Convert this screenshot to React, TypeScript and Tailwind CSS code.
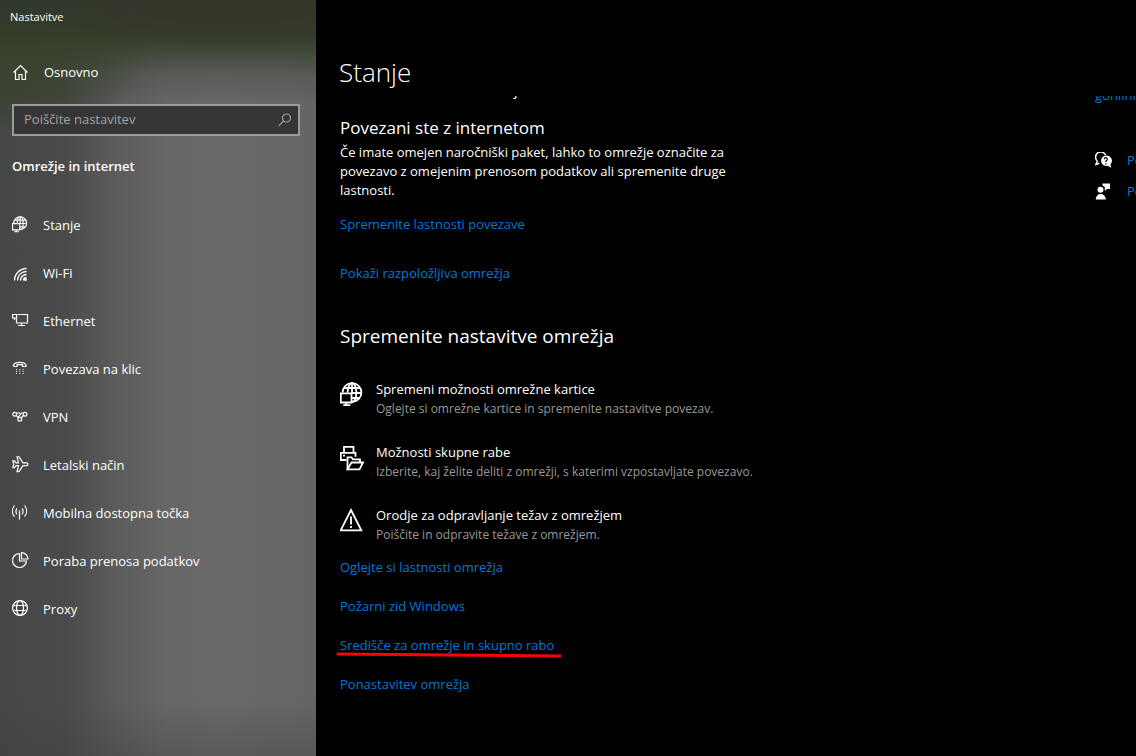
import type { ReactNode } from "react";

type IconProps = { children: ReactNode; box?: string; className?: string };

function Icon({ children, box = "0 0 17 17", className = "mb-1 size-[17px]" }: IconProps) {
  return (
    <svg
      viewBox={box}
      className={`shrink-0 ${className}`}
      fill="none"
      stroke="currentColor"
      strokeWidth="1.2"
      aria-hidden="true"
    >
      {children}
    </svg>
  );
}

const HomeIcon = () => (
  <Icon className="mb-0.5 size-[17px]">
    <path d="M1.5 8.5 8.5 1.5l7 7M3.5 7v8.5h3.500V10.500h3V15.500h3.500V7" />
  </Icon>
);

const globeMonitor = (
  <>
    <path d="M3.600 11.500A9.400 9.400 0 1 1 13 20.900" />
    <path d="M4.800 7h16.500M12.500 12h10M12.500 17h8" />
    <path d="M8.600 11.500C8.700 6.500 10.500 2.100 13 2.100s4.400 4.400 4.400 9.400-1.900 9.400-4.400 9.400M13 2.100v10" />
    <path d="M1.800 12.300h10.700v9.200H1.800zM7.200 21.500v2.500M4.300 24.200h7" />
  </>
);

const StatusIcon = () => (
  <Icon box="1 1 25 25">
    <g strokeWidth="1.700">{globeMonitor}</g>
  </Icon>
);

const WifiIcon = () => (
  <Icon className="mb-0.5 size-[17px]">
    <path d="M2.500 15.500C2.500 9 8 3.500 14.500 3.500M5.500 15.500c0-5 4-9 9-9M8.500 15.500c0-3.300 2.700-6 6-6M11.300 15.500c0-1.800 1.400-3.200 3.200-3.200" strokeWidth="1.300" />
    <circle cx="13.500" cy="14.500" r="1.500" fill="currentColor" stroke="none" />
  </Icon>
);

const EthernetIcon = () => (
  <Icon>
    <path d="M5.500 2.500h10v8.500h-11V6.500M9.500 11v2.500M6 13.500h7" />
    <path d="M.6 2.500h4v3.500h-4zM2.500 6v2" />
  </Icon>
);

const DialIcon = () => (
  <Icon>
    <path d="M1.500 6.500V5C3 1.500 12.500 1.500 14 5v1.500h-3.500V4.700H5v1.800z" />
    <path d="M4 9.500h1M7.300 9.500h1M10.600 9.500h1M4 11.500h1M7.300 11.500h1M10.600 11.500h1M4 13.500h1M7.300 13.500h1M10.600 13.500h1" />
  </Icon>
);

const VpnIcon = () => (
  <Icon>
    <circle cx="2.700" cy="6.200" r="1.900" />
    <circle cx="13" cy="6.200" r="1.900" />
    <circle cx="7.800" cy="11.300" r="1.900" />
    <path d="M4.300 5h3l1.500 1.500M4.300 7.500l2.300 2.300M11.500 5h-2L6 9.500M11.500 7.500 9.200 9.800" />
  </Icon>
);

const PlaneIcon = () => (
  <Icon>
    <path d="M.8 4.800h1.700l1.500 2h2.500L5 .8h2l4 6h3.500c2 0 2 2.900 0 2.900H11l-4 6H5l1.500-6H4l-1.500 2H.8l.9-3.500z" />
  </Icon>
);

const HotspotIcon = () => (
  <Icon>
    <path d="M7.500 6.500V15.500M5 4.500c-1.400 1.500-1.400 4.300 0 5.800M10 4.500c1.400 1.500 1.400 4.300 0 5.800M2.500 1.500C-.2 5 -.2 9.500 2.500 12.500M12.500 1.500c2.700 3.500 2.700 8 0 11" />
  </Icon>
);

const UsageIcon = () => (
  <Icon>
    <path d="M7.500 1.500a7 7 0 1 0 7 7.500h-7z" />
    <path d="M9.500.6v6.400h6.500C16 3.500 13 .6 9.500.6z" />
  </Icon>
);

const ProxyIcon = () => (
  <Icon>
    <circle cx="8" cy="8" r="7.400" />
    <ellipse cx="8" cy="8" rx="3.500" ry="7.400" />
    <path d="M1.500 5.500h13M1.500 10.500h13" />
  </Icon>
);

const large = "mt-[3px] h-[26px] w-[25px]";

const AdapterIcon = () => (
  <Icon box="1 1 25 26" className={large}>
    <g strokeWidth="1.800">{globeMonitor}</g>
  </Icon>
);

const SharingIcon = () => (
  <Icon box="1 0 25 26" className={large}>
    <g strokeWidth="1.800">
      <path d="M5 7.500V1.800h9.500V7.500M7.500 15H1.800V7.800h14.700v4M4 10.700h2" />
      <path d="M8.500 24V12.300h4l1.500 2h7v3" />
      <path d="M8.500 24.300 12.500 17.500h11.500l-3.500 6.800z" />
    </g>
  </Icon>
);

const WarningIcon = () => (
  <Icon box="1 1 25 26" className={large}>
    <path d="M12 3 22.300 23.300H1.700zM12 9.500v8M12 19v2" strokeWidth="1.800" />
  </Icon>
);

const nav = [
  { label: "Stanje", icon: <StatusIcon /> },
  { label: "Wi-Fi", icon: <WifiIcon /> },
  { label: "Ethernet", icon: <EthernetIcon /> },
  { label: "Povezava na klic", icon: <DialIcon /> },
  { label: "VPN", icon: <VpnIcon /> },
  { label: "Letalski način", icon: <PlaneIcon /> },
  { label: "Mobilna dostopna točka", icon: <HotspotIcon /> },
  { label: "Poraba prenosa podatkov", icon: <UsageIcon /> },
  { label: "Proxy", icon: <ProxyIcon /> },
];

const options = [
  {
    title: "Spremeni možnosti omrežne kartice",
    text: "Oglejte si omrežne kartice in spremenite nastavitve povezav.",
    icon: <AdapterIcon />,
  },
  {
    title: "Možnosti skupne rabe",
    text: "Izberite, kaj želite deliti z omrežji, s katerimi vzpostavljate povezavo.",
    icon: <SharingIcon />,
  },
  {
    title: "Orodje za odpravljanje težav z omrežjem",
    text: "Poiščite in odpravite težave z omrežjem.",
    icon: <WarningIcon />,
  },
];

function TextLink({ children }: { children: ReactNode }) {
  return (
    <a href="#" className="relative text-[13px] leading-5 text-[#0078d7] hover:text-[#999]">
      {children}
    </a>
  );
}

function Sidebar() {
  return (
    <aside className="flex w-[316px] shrink-0 flex-col bg-[radial-gradient(ellipse_200px_40px_at_230px_10px,rgba(56,50,40,0.7)_0%,transparent_100%),linear-gradient(to_bottom,#30382c_0px,#343c2a_35px,rgba(56,66,46,0.85)_50px,rgba(66,72,60,0.4)_75px,transparent_105px),radial-gradient(ellipse_150px_80px_at_0px_55px,#36412b_0%,#36412b_30%,transparent_100%),linear-gradient(to_bottom,transparent_700px,rgba(60,60,60,0.35)_756px),linear-gradient(to_right,#454746_0px,#4a4a4a_65px,#5b5b5b_115px,#666_165px,#696969_220px,#656565_316px)]">
      <p className="px-2.5 pt-[9px] text-[11px] leading-4">Nastavitve</p>
      <a href="#" className="mt-9 flex h-6 items-center gap-[15px] px-3 text-[13px]">
        <HomeIcon />
        Osnovno
      </a>
      <label className="mx-3 mt-[19px] flex h-8 w-72 items-center border-2 border-[#9a9a98] bg-[#353535] pr-1.5 pb-px pl-2.5">
        <input
          type="text"
          aria-label="Poiščite nastavitev"
          placeholder="Poiščite nastavitev"
          className="min-w-0 flex-1 bg-transparent text-[13px] outline-none placeholder:text-[#a3a3a3]"
        />
        <svg viewBox="0 0 14 14" className="size-3.5 text-[#a3a3a3]" fill="none" stroke="currentColor" strokeWidth="1.2" aria-hidden="true">
          <circle cx="8.500" cy="5" r="4" />
          <path d="M5.500 8 .8 12.800" />
        </svg>
      </label>
      <h2 className="mt-5 px-3 text-[13px] leading-5 font-semibold">Omrežje in internet</h2>
      <nav className="mt-[26px] flex flex-col">
        {nav.map((item) => (
          <a key={item.label} href="#" className="flex h-12 items-center gap-3.5 px-3 text-[13px]">
            {item.icon}
            {item.label}
          </a>
        ))}
      </nav>
    </aside>
  );
}

const HelpIcon = () => (
  <svg viewBox="0 0 17 17" className="size-[17px] shrink-0" fill="none" stroke="currentColor" aria-hidden="true">
    <path d="M2.300 9A5.200 5.200 0 1 1 10.500 3M2.500 9 .8 12.500l3.500-1.300" strokeWidth="1.500" />
    <path d="M10.700 3.500a5.300 5.300 0 1 0 2.300 10.300l3.300 2.200-.9-3.600A5.300 5.300 0 0 0 10.700 3.500z" fill="currentColor" stroke="none" />
    <path d="M9.300 7.300c0-2.300 3.300-2 3 .1-.2 1.200-1.500 1.200-1.500 2.600M10.800 11.300v1.200" stroke="#000" strokeWidth="1.200" />
  </svg>
);

const FeedbackIcon = () => (
  <svg viewBox="0 0 17 17" className="size-[17px] shrink-0" fill="currentColor" aria-hidden="true">
    <circle cx="5.500" cy="6.800" r="3" />
    <path d="M.8 16.500c0-7.500 10-7.500 10 0zM7.500.5H15V6H12L9.800 8V4L7.500 2.500z" />
  </svg>
);

function RelatedColumn() {
  return (
    <aside className="flex w-[41px] shrink-0 flex-col overflow-hidden whitespace-nowrap">
      <div className="-mt-3.5">
        <TextLink>gonilnik</TextLink>
      </div>
      <a href="#" className="mt-[39px] flex h-[31px] items-center gap-[15px] text-[13px] text-[#0078d7]">
        <span className="text-white"><HelpIcon /></span>
        Poiščite pomoč
      </a>
      <a href="#" className="flex h-[31px] items-center gap-[15px] text-[13px] text-[#0078d7]">
        <span className="text-white"><FeedbackIcon /></span>
        Pošljite povratne informacije
      </a>
    </aside>
  );
}

export default function App() {
  return (
    <div className="flex min-h-screen bg-black font-['Open_Sans','Noto_Sans',sans-serif] text-white">
      <Sidebar />
      <div className="flex min-w-0 flex-1 flex-col pl-5">
        <h1 className="h-24 pt-[54px] pl-[3px] text-[26px] leading-9 font-light">Stanje</h1>
        <div className="flex flex-1 overflow-hidden">
          <main className="flex min-w-0 flex-1 flex-col pl-1">
            <p className="-mt-4 pl-[174px] text-sm leading-5">j</p>
            <h3 className="mt-4 text-[17px] leading-6">Povezani ste z internetom</h3>
            <p className="mt-[3px] max-w-[410px] text-[13px] leading-[19px]">
              Če imate omejen naročniški paket, lahko to omrežje označite za povezavo z omejenim
              prenosom podatkov ali spremenite druge lastnosti.
            </p>
            <div className="mt-3.5 flex flex-col items-start gap-[29px]">
              <TextLink>Spremenite lastnosti povezave</TextLink>
              <TextLink>Pokaži razpoložljiva omrežja</TextLink>
            </div>
            <h2 className="mt-[39px] text-[19px] leading-7">Spremenite nastavitve omrežja</h2>
            <div className="mt-[29px] flex flex-col gap-6">
              {options.map((option) => (
                <a key={option.title} href="#" className="flex gap-[11px]">
                  {option.icon}
                  <span className="flex flex-col">
                    <span className="text-[13px] leading-5">{option.title}</span>
                    <span className="text-xs leading-[19px] text-[#999]">{option.text}</span>
                  </span>
                </a>
              ))}
            </div>
            <div className="mt-[13px] flex flex-col items-start gap-[19px]">
              <TextLink>Oglejte si lastnosti omrežja</TextLink>
              <TextLink>Požarni zid Windows</TextLink>
              <TextLink>
                Središče za omrežje in skupno rabo
                <svg viewBox="0 0 226 6" className="absolute top-[17px] -left-1 h-1.5 w-[226px]" aria-hidden="true">
                  <path d="M2 2 112 3l112 1" fill="none" stroke="#ff0000" strokeWidth="3" strokeLinecap="round" />
                </svg>
              </TextLink>
              <TextLink>Ponastavitev omrežja</TextLink>
            </div>
          </main>
          <RelatedColumn />
        </div>
      </div>
    </div>
  );
}
